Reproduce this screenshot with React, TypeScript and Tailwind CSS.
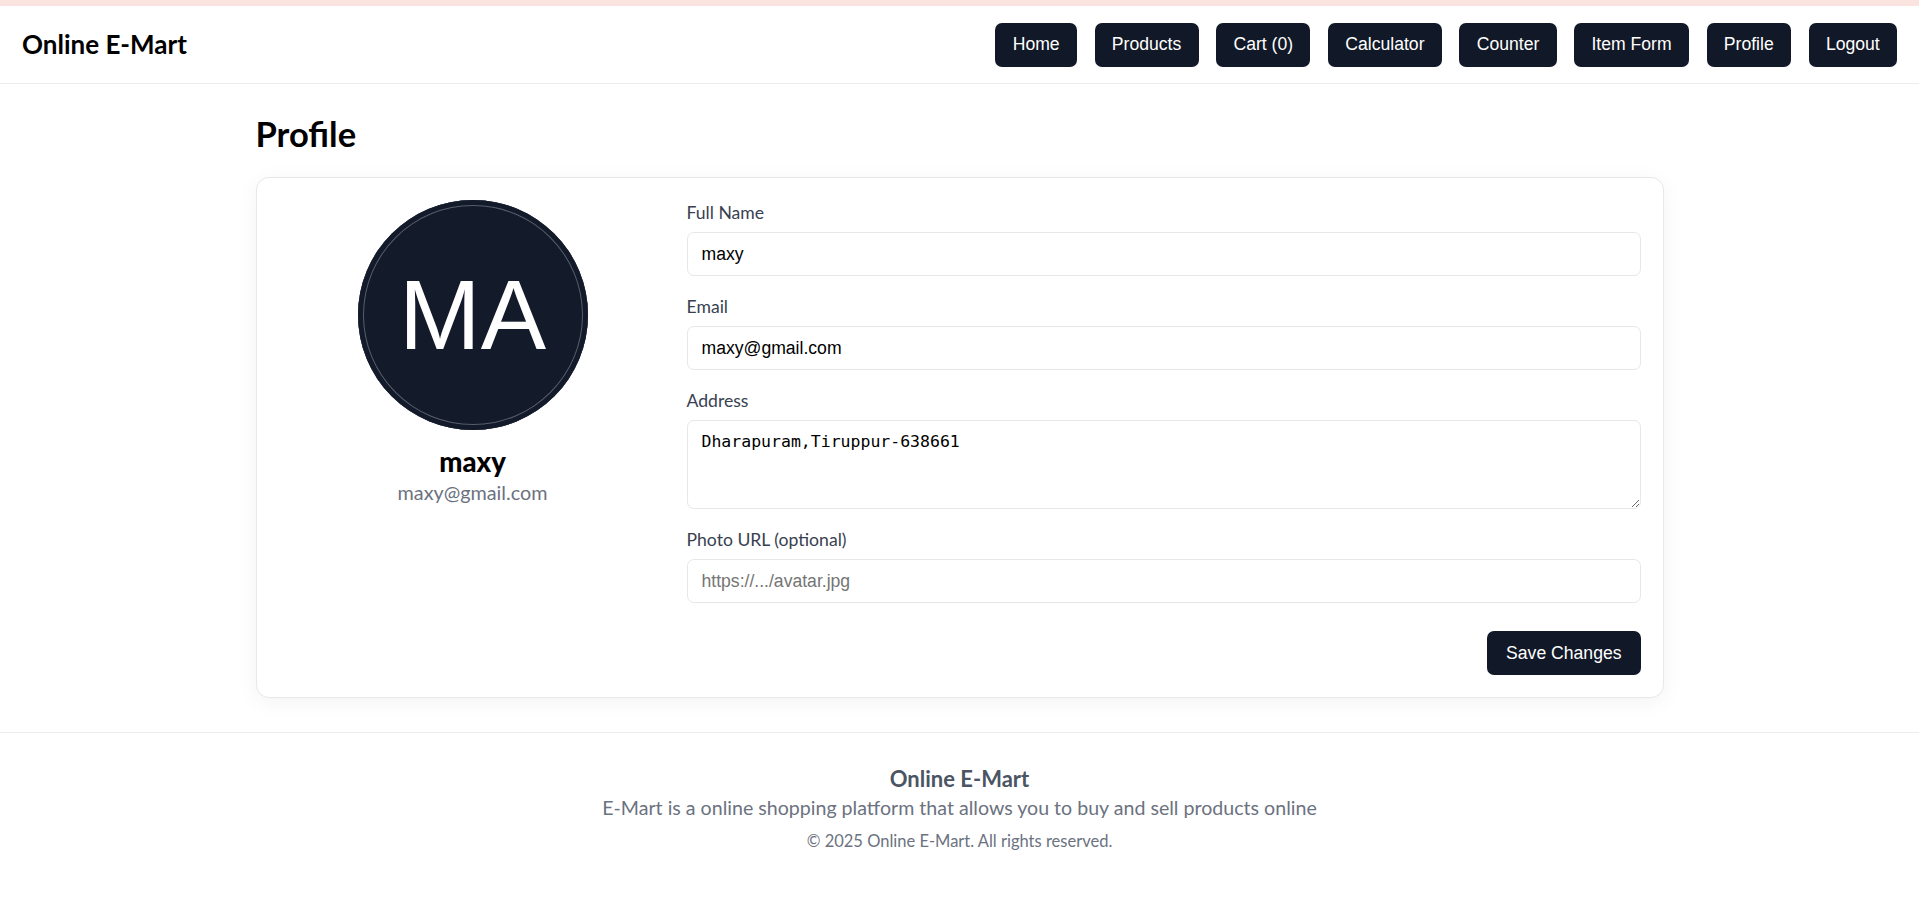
import React from 'react';

const navItems = ['Home', 'Products', 'Cart (0)', 'Calculator', 'Counter', 'Item Form', 'Profile', 'Logout'];

const btnClass = "h-[44px] px-[17.3px] rounded-[7px] bg-[#111827] text-white text-[17.6px] font-['Liberation_Sans',Arial,sans-serif] leading-none";
const inputClass = "w-full h-[44px] px-[14px] rounded-[7px] border border-[#e5e7eb] bg-white text-[17.6px] text-black font-['Liberation_Sans',Arial,sans-serif] outline-none placeholder:text-[#757575]";

function Field({ label, children }: { label: string; children: React.ReactNode }) {
    return (
        <div>
            <label className="block mb-[6px] text-[17.6px] leading-[26.4px] text-[#374151]">{label}</label>
            {children}
        </div>
    );
}

export default function App() {
    return (
        <div className="min-h-screen bg-white text-black font-['Lato','Noto_Sans',sans-serif]">
            <div className="h-[6px] bg-[#fbe3df]" />

            {/* Header */}
            <header className="h-[78px] flex items-center justify-between px-[22px] border-b border-[#ededed]">
                <h1 className="text-[26px] font-bold">Online E-Mart</h1>
                <nav className="flex items-center gap-[17.6px]">
                    {navItems.map((item) => (
                        <button key={item} className={btnClass}>{item}</button>
                    ))}
                </nav>
            </header>

            {/* Main */}
            <main className="max-w-[1408px] mx-auto pt-[30px] pb-[34px]">
                <h2 className="text-[34.5px] leading-[39.6px] font-bold mb-[23px]">Profile</h2>

                <div className="grid grid-cols-[388px_1fr] gap-x-[20px] p-[22px] bg-white border border-[#e8e8ea] rounded-[13px] shadow-[0_4px_22px_rgba(0,0,0,0.05)]">
                    <div className="flex flex-col items-center">
                        <div className="w-[230px] h-[230px] rounded-full bg-[#131a2a] shadow-[inset_0_0_0_5px_#131a2a,inset_0_0_0_6px_#575d6b] flex items-center justify-center">
                            <span className="text-white text-[98px] font-['Liberation_Sans',Arial,sans-serif] leading-none">MA</span>
                        </div>
                        <div className="mt-[16px] text-[27.5px] leading-[32px] font-black">maxy</div>
                        <div className="mt-[1px] text-[19.8px] leading-[26.4px] text-[#6b7280]">maxy@gmail.com</div>
                    </div>

                    <div className="flex flex-col gap-[17.6px]">
                        <Field label="Full Name">
                            <input className={inputClass} defaultValue="maxy" />
                        </Field>
                        <Field label="Email">
                            <input className={inputClass} defaultValue="maxy@gmail.com" />
                        </Field>
                        <Field label="Address">
                            <textarea
                                className="block w-full h-[89px] px-[14px] py-[10px] rounded-[7px] border border-[#e5e7eb] text-[16.5px] leading-[22px] text-black font-['DejaVu_Sans_Mono',monospace] outline-none"
                                defaultValue="Dharapuram,Tiruppur-638661"
                            />
                        </Field>
                        <Field label="Photo URL (optional)">
                            <input className={inputClass} placeholder="https://.../avatar.jpg" />
                        </Field>
                        <div className="flex justify-end mt-[10.4px]">
                            <button className="h-[44px] px-[19px] rounded-[7px] bg-[#111827] text-white text-[17.6px] font-['Liberation_Sans',Arial,sans-serif]">Save Changes</button>
                        </div>
                    </div>
                </div>
            </main>

            {/* Footer */}
            <footer className="border-t border-[#ececec] pt-[31px] pb-[40px] text-center">
                <div className="text-[22px] leading-[30px] font-bold text-[#4b5563]">Online E-Mart</div>
                <p className="text-[19.6px] leading-[28px] text-[#6b7280]">E-Mart is a online shopping platform that allows you to buy and sell products online</p>
                <p className="mt-[8px] text-[16.5px] leading-[22px] text-[#6b7280]">© 2025 Online E-Mart. All rights reserved.</p>
            </footer>
        </div>
    );
}
